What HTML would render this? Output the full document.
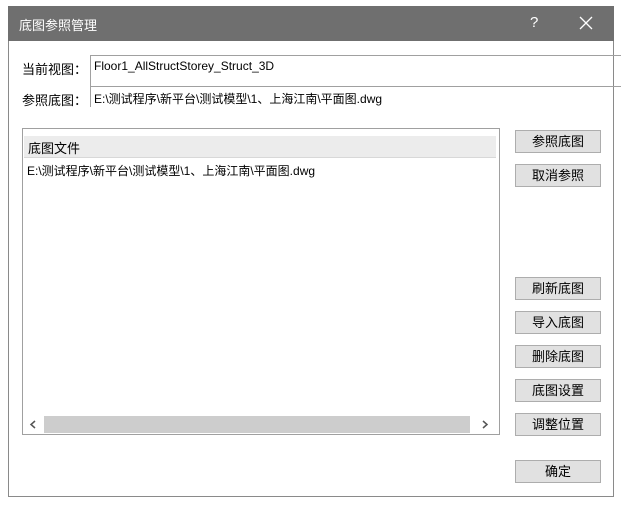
<!DOCTYPE html>
<html><head><meta charset="utf-8"><style>
body{margin:0;width:622px;height:507px;background:#fff;position:relative;overflow:hidden;font-family:"Liberation Sans","Noto Sans CJK SC",sans-serif;font-size:13px;color:#000}
.a{position:absolute}
.win{left:8px;top:6px;width:606px;height:491px;border:1px solid #8a8a8a;background:#fff;box-sizing:border-box}
.title{left:8px;top:6px;width:606px;height:35px;background:#6f6f6f;color:#fff}
.btn{position:absolute;left:515px;width:86px;height:23px;background:#e1e1e1;border:1px solid #adadad;box-sizing:border-box;text-align:center;line-height:21px;font-size:13px}
</style></head><body>
<div class="a win"></div>
<div class="a title"><span class="a" style="left:11px;top:9px;font-size:13px">底图参照管理</span><span class="a" style="left:522px;top:8px;font-size:15px">?</span>
<svg class="a" style="left:571px;top:10px" width="14" height="14"><path d="M1 1L13 13M13 1L1 13" stroke="#fff" stroke-width="1.3"/></svg></div>
<span class="a" style="left:22px;top:59px">当前视图：</span>
<div class="a" style="left:90px;top:55px;width:530px;height:32px;border-top:1px solid #a0a0a0;border-left:1px solid #a0a0a0"></div>
<span class="a" style="left:94px;top:59px;font-size:12px">Floor1_AllStructStorey_Struct_3D</span>
<span class="a" style="left:22px;top:90px">参照底图：</span>
<div class="a" style="left:90px;top:86px;width:530px;height:20px;border-top:1px solid #a0a0a0;border-left:1px solid #a0a0a0"></div>
<span class="a" style="left:94px;top:90px;font-size:12px">E:\测试程序\新平台\测试模型\1、上海江南\平面图.dwg</span>
<div class="a" style="left:22px;top:128px;width:478px;height:307px;border:1px solid #a0a0a0;box-sizing:border-box"></div>
<div class="a" style="left:24px;top:136px;width:472px;height:21px;background:#ececec;border-bottom:1px solid #d8d8d8"></div>
<span class="a" style="left:28px;top:138px">底图文件</span>
<span class="a" style="left:27px;top:162px;font-size:12px">E:\测试程序\新平台\测试模型\1、上海江南\平面图.dwg</span>
<div class="a" style="left:44px;top:416px;width:426px;height:17px;background:#cdcdcd"></div>
<svg class="a" style="left:29px;top:420px" width="8" height="9"><path d="M6 1L2 4.5L6 8" stroke="#555" stroke-width="1.5" fill="none"/></svg>
<svg class="a" style="left:481px;top:420px" width="8" height="9"><path d="M2 1L6 4.5L2 8" stroke="#555" stroke-width="1.5" fill="none"/></svg>
<div class="btn" style="top:130px">参照底图</div>
<div class="btn" style="top:164px">取消参照</div>
<div class="btn" style="top:277px">刷新底图</div>
<div class="btn" style="top:311px">导入底图</div>
<div class="btn" style="top:345px">删除底图</div>
<div class="btn" style="top:379px">底图设置</div>
<div class="btn" style="top:413px">调整位置</div>
<div class="btn" style="top:460px">确定</div>
</body></html>
